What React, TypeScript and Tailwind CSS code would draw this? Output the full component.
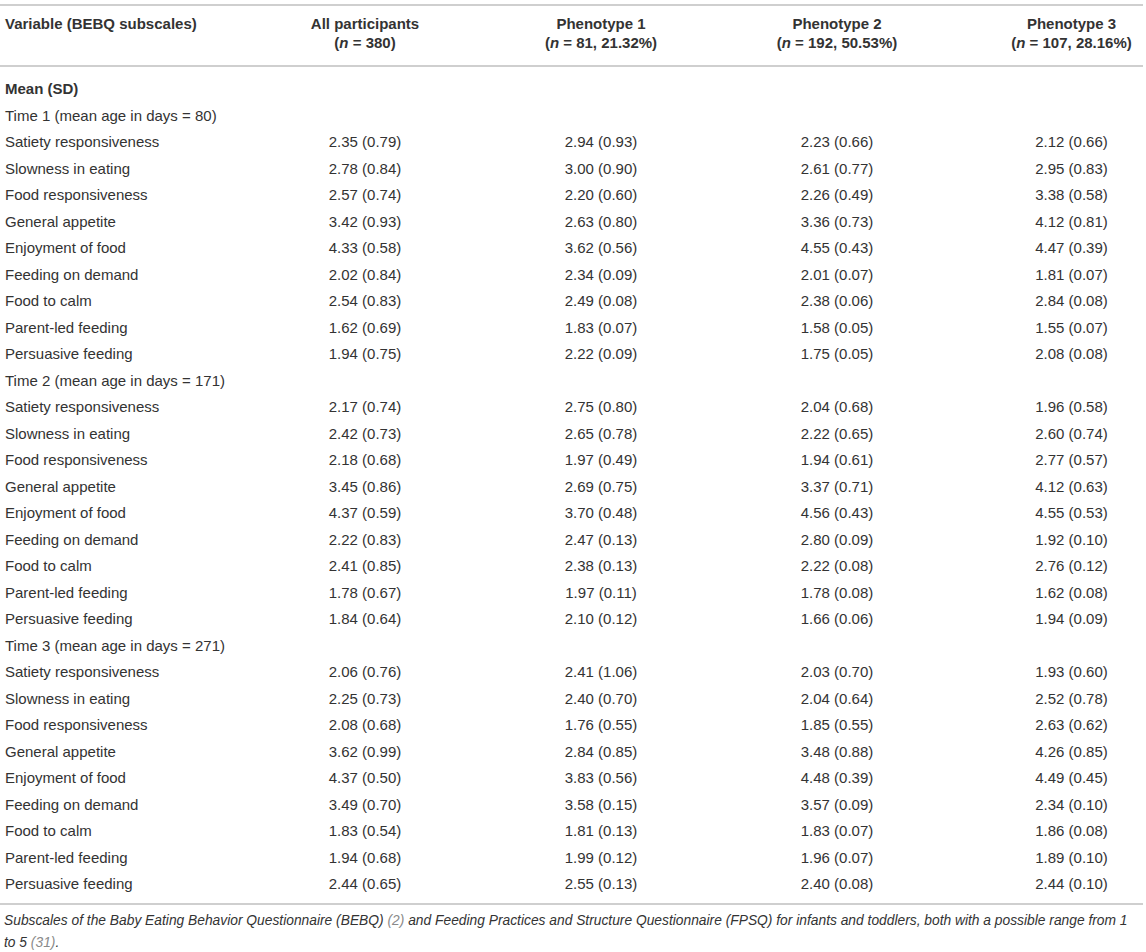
import React from 'react';

type Row = [string, string, string, string, string];

const times: { label: string; rows: Row[] }[] = [
    {
        label: 'Time 1 (mean age in days = 80)',
        rows: [
            ['Satiety responsiveness', '2.35 (0.79)', '2.94 (0.93)', '2.23 (0.66)', '2.12 (0.66)'],
            ['Slowness in eating', '2.78 (0.84)', '3.00 (0.90)', '2.61 (0.77)', '2.95 (0.83)'],
            ['Food responsiveness', '2.57 (0.74)', '2.20 (0.60)', '2.26 (0.49)', '3.38 (0.58)'],
            ['General appetite', '3.42 (0.93)', '2.63 (0.80)', '3.36 (0.73)', '4.12 (0.81)'],
            ['Enjoyment of food', '4.33 (0.58)', '3.62 (0.56)', '4.55 (0.43)', '4.47 (0.39)'],
            ['Feeding on demand', '2.02 (0.84)', '2.34 (0.09)', '2.01 (0.07)', '1.81 (0.07)'],
            ['Food to calm', '2.54 (0.83)', '2.49 (0.08)', '2.38 (0.06)', '2.84 (0.08)'],
            ['Parent-led feeding', '1.62 (0.69)', '1.83 (0.07)', '1.58 (0.05)', '1.55 (0.07)'],
            ['Persuasive feeding', '1.94 (0.75)', '2.22 (0.09)', '1.75 (0.05)', '2.08 (0.08)'],
        ],
    },
    {
        label: 'Time 2 (mean age in days = 171)',
        rows: [
            ['Satiety responsiveness', '2.17 (0.74)', '2.75 (0.80)', '2.04 (0.68)', '1.96 (0.58)'],
            ['Slowness in eating', '2.42 (0.73)', '2.65 (0.78)', '2.22 (0.65)', '2.60 (0.74)'],
            ['Food responsiveness', '2.18 (0.68)', '1.97 (0.49)', '1.94 (0.61)', '2.77 (0.57)'],
            ['General appetite', '3.45 (0.86)', '2.69 (0.75)', '3.37 (0.71)', '4.12 (0.63)'],
            ['Enjoyment of food', '4.37 (0.59)', '3.70 (0.48)', '4.56 (0.43)', '4.55 (0.53)'],
            ['Feeding on demand', '2.22 (0.83)', '2.47 (0.13)', '2.80 (0.09)', '1.92 (0.10)'],
            ['Food to calm', '2.41 (0.85)', '2.38 (0.13)', '2.22 (0.08)', '2.76 (0.12)'],
            ['Parent-led feeding', '1.78 (0.67)', '1.97 (0.11)', '1.78 (0.08)', '1.62 (0.08)'],
            ['Persuasive feeding', '1.84 (0.64)', '2.10 (0.12)', '1.66 (0.06)', '1.94 (0.09)'],
        ],
    },
    {
        label: 'Time 3 (mean age in days = 271)',
        rows: [
            ['Satiety responsiveness', '2.06 (0.76)', '2.41 (1.06)', '2.03 (0.70)', '1.93 (0.60)'],
            ['Slowness in eating', '2.25 (0.73)', '2.40 (0.70)', '2.04 (0.64)', '2.52 (0.78)'],
            ['Food responsiveness', '2.08 (0.68)', '1.76 (0.55)', '1.85 (0.55)', '2.63 (0.62)'],
            ['General appetite', '3.62 (0.99)', '2.84 (0.85)', '3.48 (0.88)', '4.26 (0.85)'],
            ['Enjoyment of food', '4.37 (0.50)', '3.83 (0.56)', '4.48 (0.39)', '4.49 (0.45)'],
            ['Feeding on demand', '3.49 (0.70)', '3.58 (0.15)', '3.57 (0.09)', '2.34 (0.10)'],
            ['Food to calm', '1.83 (0.54)', '1.81 (0.13)', '1.83 (0.07)', '1.86 (0.08)'],
            ['Parent-led feeding', '1.94 (0.68)', '1.99 (0.12)', '1.96 (0.07)', '1.89 (0.10)'],
            ['Persuasive feeding', '2.44 (0.65)', '2.55 (0.13)', '2.40 (0.08)', '2.44 (0.10)'],
        ],
    },
];

const grid = 'grid grid-cols-[250px_230px_242px_230px_1fr]';

function HeadCell({ title, n }: { title: string; n: string }) {
    return (
        <div className="text-center">
            <div>{title}</div>
            <div>
                (<i>n</i> = {n})
            </div>
        </div>
    );
}

export default function App() {
    return (
        <div className="bg-white w-[1146px] h-[952px] pt-[4px] text-[#333] text-[15px] font-['Liberation_Sans',Arial,sans-serif]">
            <div className="w-[1143px]">
                {/* Header */}
                <div className={`${grid} border-t-2 border-b-2 border-[#cfcfcf] pt-[8px] pb-[13px] font-bold leading-[19px]`}>
                    <div className="pl-[5px]">Variable (BEBQ subscales)</div>
                    <HeadCell title="All participants" n="380" />
                    <HeadCell title="Phenotype 1" n="81, 21.32%" />
                    <HeadCell title="Phenotype 2" n="192, 50.53%" />
                    <div className="pl-[48px]">
                        <HeadCell title="Phenotype 3" n="107, 28.16%" />
                    </div>
                </div>

                {/* Body */}
                <div className="pt-[9px] pb-[5px] border-b-2 border-[#cfcfcf]">
                    <div className="h-[26.5px] leading-[26.5px] pl-[5px] font-bold">Mean (SD)</div>
                    {times.map((t) => (
                        <React.Fragment key={t.label}>
                            <div className="h-[26.5px] leading-[26px] pl-[5px]">{t.label}</div>
                            {t.rows.map((r) => (
                                <div key={t.label + r[0]} className={`${grid} h-[26.5px] leading-[26.5px]`}>
                                    <div className="pl-[5px]">{r[0]}</div>
                                    <div className="text-center">{r[1]}</div>
                                    <div className="text-center">{r[2]}</div>
                                    <div className="text-center">{r[3]}</div>
                                    <div className="text-center pl-[48px]">{r[4]}</div>
                                </div>
                            ))}
                        </React.Fragment>
                    ))}
                </div>

                {/* Footnote */}
                <p className="pt-[5px] pl-[4px] italic text-[13.8px] leading-[22px] text-[#333]">
                    <span className="whitespace-nowrap">
                        Subscales of the Baby Eating Behavior Questionnaire (BEBQ){' '}
                        <span className="text-[#8a8a8a]">(2)</span> and Feeding Practices and Structure Questionnaire (FPSQ) for
                        infants and toddlers, both with a possible range from 1
                    </span>
                    <br />
                    to 5 <span className="text-[#8a8a8a]">(31)</span>.
                </p>
            </div>
        </div>
    );
}
